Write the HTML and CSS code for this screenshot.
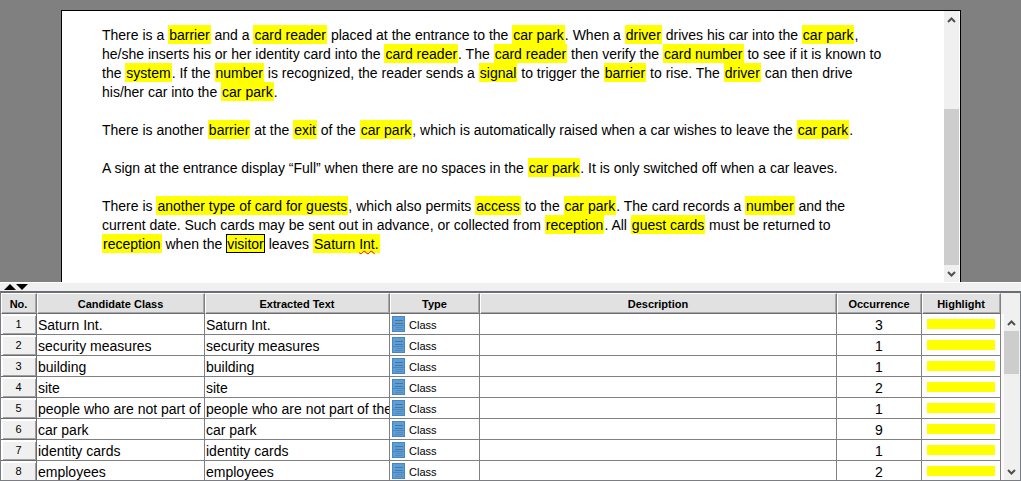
FILE: index.html
```html
<!DOCTYPE html>
<html lang="en">
<head>
    <meta charset="UTF-8">
    <meta name="viewport" content="width=device-width, initial-scale=1.0">
    <title>Textual Analysis</title>
    <link rel="stylesheet" href="styles.css">
</head>
<body>
    <div class="editor">
        <div class="page">
            <div class="text">
                <p>There is a <mark>barrier</mark> and a <mark>card reader</mark> placed at the entrance to the <mark>car park</mark>. When a <mark>driver</mark> drives his car into the <mark>car park</mark>, he/she inserts his or her identity card into the <mark>card reader</mark>. The <mark>card reader</mark> then verify the <mark>card number</mark> to see if it is known to the <mark>system</mark>. If the <mark>number</mark> is recognized, the reader sends a <mark>signal</mark> to trigger the <mark>barrier</mark> to rise. The <mark>driver</mark> can then drive his/her car into the <mark>car park</mark>.</p>
                <p>There is another <mark>barrier</mark> at the <mark>exit</mark> of the <mark>car park</mark>, which is automatically raised when a car wishes to leave the <mark>car park</mark>.</p>
                <p>A sign at the entrance display “Full” when there are no spaces in the <mark>car park</mark>. It is only switched off when a car leaves.</p>
                <p>There is <mark>another type of card for guests</mark>, which also permits <mark>access</mark> to the <mark>car park</mark>. The card records a <mark>number</mark> and the current date. Such cards may be sent out in advance, or collected from <mark>reception</mark>. All <mark>guest cards</mark> must be returned to <mark>reception</mark> when the <mark class="selected">visitor</mark> leaves <mark>Saturn <span class="misspelled">Int</span>.</mark></p>
            </div>
            <div class="scrollbar">
                <button class="scroll-btn" aria-label="Scroll up"><svg width="9" height="6" viewBox="0 0 9 6"><path d="M1 5 L4.500 1.500 L8 5"/></svg></button>
                <div class="track"><div class="thumb thumb-text"></div></div>
                <button class="scroll-btn" aria-label="Scroll down"><svg width="9" height="6" viewBox="0 0 9 6"><path d="M1 1 L4.500 4.500 L8 1"/></svg></button>
            </div>
        </div>
    </div>

    <div class="splitter">
        <button aria-label="Collapse text"><svg width="12" height="6" viewBox="0 0 12 6"><path d="M0 6 L6 0 L12 6 Z"/></svg></button>
        <button aria-label="Collapse table"><svg width="12" height="6" viewBox="0 0 12 6"><path d="M0 0 L12 0 L6 6 Z"/></svg></button>
    </div>

    <div class="grid">
        <table>
            <colgroup>
                <col class="col-no">
                <col class="col-class">
                <col class="col-text">
                <col class="col-type">
                <col>
                <col class="col-occurrence">
                <col class="col-highlight">
            </colgroup>
            <thead>
                <tr><th>No.</th><th>Candidate Class</th><th>Extracted Text</th><th>Type</th><th>Description</th><th>Occurrence</th><th>Highlight</th></tr>
            </thead>
            <tbody id="rows"></tbody>
        </table>
        <div class="scrollbar grid-scrollbar">
            <button class="scroll-btn" aria-label="Scroll up"><svg width="9" height="6" viewBox="0 0 9 6"><path d="M1 5 L4.500 1.500 L8 5"/></svg></button>
            <div class="track"><div class="thumb thumb-grid"></div></div>
            <button class="scroll-btn" aria-label="Scroll down"><svg width="9" height="6" viewBox="0 0 9 6"><path d="M1 1 L4.500 4.500 L8 1"/></svg></button>
        </div>
    </div>

    <script src="script.js"></script>
</body>
</html>
```

FILE: styles.css
```css
* {
    box-sizing: border-box;
}

body {
    display: flex;
    flex-direction: column;
    height: 100vh;
    margin: 0;
    overflow: hidden;
    background-color: #f0f0f0;
    color: #000;
    font-family: "Liberation Sans", Arial, sans-serif;
    font-size: 14px;
}

button {
    display: flex;
    align-items: center;
    justify-content: center;
    padding: 0;
    border: none;
    background: none;
}

/* text editor */
.editor {
    flex: none;
    padding: 10px 60px 0 61px;
    background-color: #808080;
}

.page {
    display: flex;
    border: 1px solid #000;
    border-bottom: none;
    background-color: #fff;
}

.text {
    flex: 1;
    padding: 15px 56px 28px 40px;
    line-height: 19px;
}

.text p {
    margin: 0 0 19px;
}

.text p:last-child {
    margin-bottom: 0;
}

mark {
    padding: 2px 1px 1px;
    background-color: #ff0;
    color: #000;
}

.selected {
    outline: 1px solid #000;
    outline-offset: -1px;
}

.misspelled {
    text-decoration: underline wavy #f00 1px;
    text-decoration-skip-ink: none;
}

/* scrollbars */
.scrollbar {
    display: flex;
    flex-direction: column;
    width: 15px;
    margin-right: 1px;
    background-color: #f0f0f0;
}

.scroll-btn {
    flex: none;
    height: 17px;
}

.scroll-btn path {
    fill: none;
    stroke: #505050;
    stroke-width: 2;
}

.track {
    flex: 1;
    display: flex;
    flex-direction: column;
}

.thumb {
    background-color: #cdcdcd;
}

.thumb-text {
    height: 66%;
    margin-top: auto;
}

.thumb-grid {
    height: 43px;
}

/* splitter */
.splitter {
    flex: none;
    display: flex;
    align-items: flex-start;
    height: 9px;
    padding: 1px 4px;
    border-top: 1px solid #fff;
}

/* candidate classes */
.grid {
    flex: 1;
    display: flex;
    min-height: 0;
    overflow: hidden;
    border: 1px solid #7a7d84;
    border-top: 2px solid #6b6d73;
}

table {
    flex: 1;
    width: 0;
    height: 0;
    table-layout: fixed;
    border-collapse: separate;
    border-spacing: 0;
}

.col-no { width: 36px; }
.col-class { width: 168px; }
.col-text { width: 185px; }
.col-type { width: 90px; }
.col-occurrence { width: 85px; }
.col-highlight { width: 79px; }

th {
    height: 21px;
    padding: 2px 1px 0 0;
    border-style: solid;
    border-width: 1px;
    border-color: #fff #808080 #6b6d73 #fff;
    box-shadow: inset -1px -1px #a8a8a8;
    background-color: #e1e1e1;
    font-size: 11px;
    line-height: 17px;
}

td {
    height: 21px;
    padding: 2px 1px 0;
    overflow: hidden;
    border-right: 1px solid #808080;
    border-bottom: 1px solid #808080;
    background-color: #fff;
    line-height: 18px;
    white-space: nowrap;
}

.no {
    padding-top: 0;
    border-right-color: #6b6d73;
    border-bottom-color: #6b6d73;
    box-shadow: inset 2px 2px #fff, inset -1px -1px #a0a0a0;
    background-color: #f0f0f0;
    font-size: 11px;
    text-align: center;
}

.type {
    padding-left: 2px;
    font-size: 11px;
}

.type div {
    display: flex;
    gap: 4px;
}

.occurrence {
    text-align: center;
}

.highlight {
    padding: 0 5px;
}

.highlight div {
    height: 10px;
    background-color: #ff0;
}

.grid-scrollbar {
    width: 18px;
    margin-top: 21px;
    border-left: 3px solid #fafafa;
}
```

FILE: script.js
```js
const candidates = [
    { name: 'Saturn Int.', count: 3 },
    { name: 'security measures', count: 1 },
    { name: 'building', count: 1 },
    { name: 'site', count: 2 },
    { name: 'people who are not part of the company', count: 1 },
    { name: 'car park', count: 9 },
    { name: 'identity cards', count: 1 },
    { name: 'employees', count: 2 }
];

const classIcon = `
    <svg width="13" height="16" viewBox="0 0 13 16">
        <rect width="13" height="16" fill="#4686c6"/>
        <rect x="1" y="1" width="11" height="8" fill="#5a9fd8"/>
        <rect x="1" y="10" width="11" height="5" fill="#5a9fd8"/>
        <path d="M3 4.500 H11 M3 7.500 H11" stroke="#54738f"/>
        <path d="M4 11.500 H11 M3 13.500 H11" stroke="#5f88ae"/>
    </svg>`;

document.getElementById('rows').innerHTML = candidates.map((c, i) => `
    <tr>
        <td class="no">${i + 1}</td>
        <td>${c.name}</td>
        <td>${c.name}</td>
        <td class="type"><div>${classIcon}<span>Class</span></div></td>
        <td></td>
        <td class="occurrence">${c.count}</td>
        <td class="highlight"><div></div></td>
    </tr>`).join('');
```
